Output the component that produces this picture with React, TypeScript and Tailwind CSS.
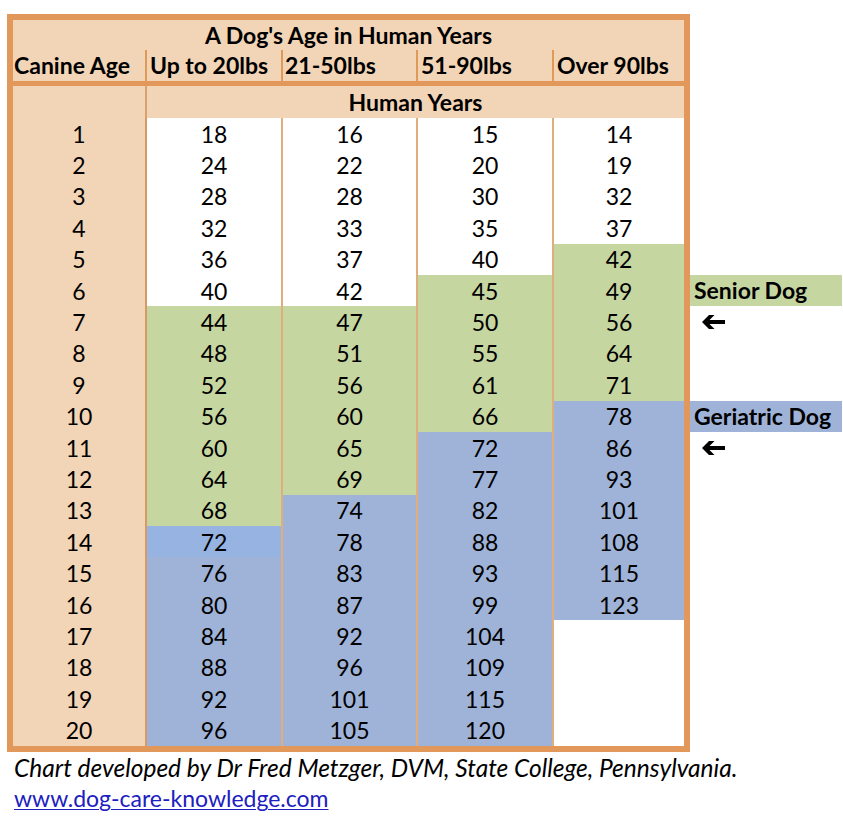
import React from "react";

type Tone = "w" | "g" | "b" | "bb";

const rows: [number, (number | null)[], Tone[]][] = [
  [1, [18, 16, 15, 14], ["w", "w", "w", "w"]],
  [2, [24, 22, 20, 19], ["w", "w", "w", "w"]],
  [3, [28, 28, 30, 32], ["w", "w", "w", "w"]],
  [4, [32, 33, 35, 37], ["w", "w", "w", "w"]],
  [5, [36, 37, 40, 42], ["w", "w", "w", "g"]],
  [6, [40, 42, 45, 49], ["w", "w", "g", "g"]],
  [7, [44, 47, 50, 56], ["g", "g", "g", "g"]],
  [8, [48, 51, 55, 64], ["g", "g", "g", "g"]],
  [9, [52, 56, 61, 71], ["g", "g", "g", "g"]],
  [10, [56, 60, 66, 78], ["g", "g", "g", "b"]],
  [11, [60, 65, 72, 86], ["g", "g", "b", "b"]],
  [12, [64, 69, 77, 93], ["g", "g", "b", "b"]],
  [13, [68, 74, 82, 101], ["g", "b", "b", "b"]],
  [14, [72, 78, 88, 108], ["bb", "b", "b", "b"]],
  [15, [76, 83, 93, 115], ["b", "b", "b", "b"]],
  [16, [80, 87, 99, 123], ["b", "b", "b", "b"]],
  [17, [84, 92, 104, null], ["b", "b", "b", "w"]],
  [18, [88, 96, 109, null], ["b", "b", "b", "w"]],
  [19, [92, 101, 115, null], ["b", "b", "b", "w"]],
  [20, [96, 105, 120, null], ["b", "b", "b", "w"]],
];

const toneClass: Record<Tone, string> = {
  w: "bg-white",
  g: "bg-[#c6d6a0]",
  b: "bg-[#9fb3d8]",
  bb: "bg-[#96b3e2]",
};

function Arrow() {
  return (
    <svg width="23" height="14" viewBox="0 0 23 14" className="block">
      <polygon points="0,7 7,0 12.5,0 7.5,5 23,5 23,9 7.5,9 12.5,14 7,14" fill="#000" />
    </svg>
  );
}

export default function App() {
  return (
    <div className="min-h-[821px] w-[843px] bg-white font-['Lato',sans-serif] text-black">
      <div className="flex items-start pt-[14px] pl-[7px]">
        {/* Table */}
        <div className="w-[683px] border-[6px] border-[#e2985a] bg-[#f2d4b6]">
          {/* Title row */}
          <div className="flex h-[30px] items-center justify-center pt-[1px] text-[23px] font-bold leading-none">
            A Dog's Age in Human Years
          </div>
          {/* Column headers */}
          <div className="grid h-[31px] grid-cols-[132px_136px_135px_136px_132px] text-[23px] font-bold leading-none">
            <div className="flex items-center pl-[1px]">Canine Age</div>
            <div className="flex items-center border-l-2 border-[#e09a58] pl-[3px]">Up to 20lbs</div>
            <div className="flex items-center border-l-2 border-[#e09a58] pl-[2px]">21-50lbs</div>
            <div className="flex items-center border-l-2 border-[#e09a58] pl-[3px]">51-90lbs</div>
            <div className="flex items-center border-l-2 border-[#e09a58] pl-[3px]">Over 90lbs</div>
          </div>
          <div className="h-[5px] bg-[#e2985a]" />
          {/* Human Years row */}
          <div className="grid h-[32px] grid-cols-[132px_539px] text-[23px] font-bold leading-none">
            <div />
            <div className="flex items-center justify-center border-l-2 border-[#d9a070]">Human Years</div>
          </div>
          {/* Data */}
          <div className="grid grid-cols-[132px_136px_135px_136px_132px] grid-rows-[repeat(20,31.4px)] text-[23px] leading-none">
            {rows.map(([age, vals, tones]) => (
              <React.Fragment key={age}>
                <div className="flex items-center justify-center bg-[#f2d4b6] pt-[1px]">{age}</div>
                {vals.map((v, i) => (
                  <div
                    key={i}
                    className={`flex items-center justify-center border-l-2 pt-[1px] ${
                      i === 0 ? "border-[#d59a68]" : "border-[#e0ad7d]"
                    } ${toneClass[tones[i]]}`}
                  >
                    {v ?? ""}
                  </div>
                ))}
              </React.Fragment>
            ))}
          </div>
        </div>
        {/* Side labels */}
        <div className="grid w-[152px] grid-rows-[repeat(20,31.4px)] pt-[104px] text-[23px] font-bold leading-none">
          {Array.from({ length: 20 }).map((_, i) => {
            if (i === 5)
              return (
                <div key={i} className="flex items-center bg-[#c6d6a0] pl-[4px]">
                  Senior Dog
                </div>
              );
            if (i === 9)
              return (
                <div key={i} className="flex items-center bg-[#9fb3d8] pl-[4px]">
                  Geriatric Dog
                </div>
              );
            if (i === 6 || i === 10)
              return (
                <div key={i} className="flex items-center pl-[12px]">
                  <Arrow />
                </div>
              );
            return <div key={i} />;
          })}
        </div>
      </div>
      {/* Footer */}
      <div className="pl-[14px] leading-[31px]">
        <div className="text-[24.5px] italic">Chart developed by Dr Fred Metzger, DVM, State College, Pennsylvania.</div>
        <div className="text-[23px]">
          <a className="text-[#2020c0] underline decoration-1 underline-offset-2" href="#">
            www.dog-care-knowledge.com
          </a>
        </div>
      </div>
    </div>
  );
}
